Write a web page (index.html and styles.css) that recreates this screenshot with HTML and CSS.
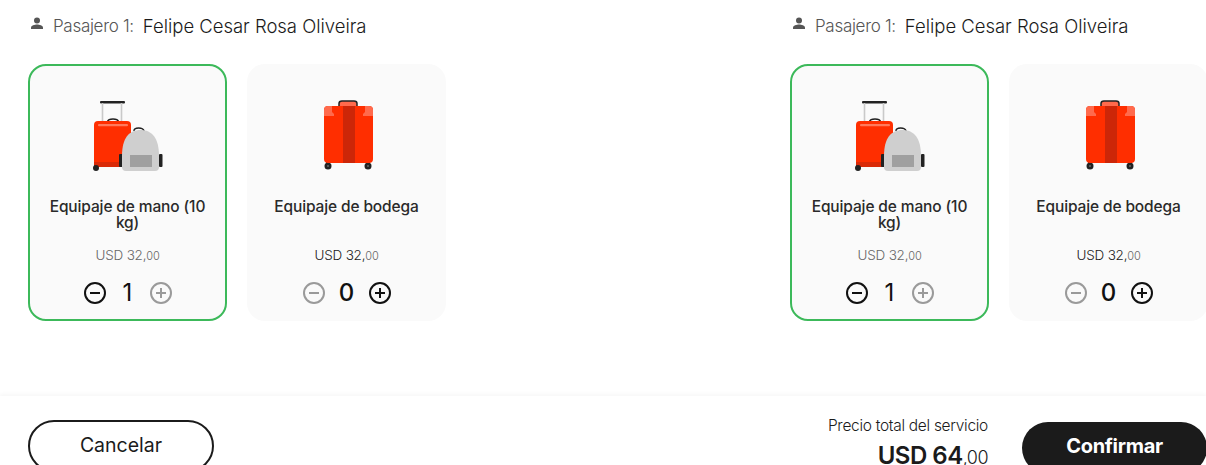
FILE: index.html
```html
<!DOCTYPE html>
<html lang="es">
<head>
    <meta charset="UTF-8">
    <meta name="viewport" content="width=device-width, initial-scale=1.0">
    <link rel="stylesheet" href="styles.css">
</head>
<body>
    <svg class="icon-defs" width="0" height="0">
        <symbol id="icon-person" viewBox="0 0 16 16">
            <circle cx="8" cy="4.5" r="3" fill="currentColor"/>
            <path d="M2 13v-1.5C2 9.6 5.6 8.6 8 8.6s6 1 6 2.9V13z" fill="currentColor"/>
        </symbol>
        <symbol id="icon-minus" viewBox="0 0 24 24">
            <circle cx="12" cy="12" r="10" fill="none" stroke="currentColor" stroke-width="2"/>
            <path d="M7 12h10" stroke="currentColor" stroke-width="2"/>
        </symbol>
        <symbol id="icon-plus" viewBox="0 0 24 24">
            <circle cx="12" cy="12" r="10" fill="none" stroke="currentColor" stroke-width="2"/>
            <path d="M7 12h10M12 7v10" stroke="currentColor" stroke-width="2"/>
        </symbol>
        <symbol id="bag-cabin" viewBox="0 0 80 80">
            <rect x="12" y="5" width="25" height="2.4" rx="1" fill="#222"/>
            <path d="M14.500 7v20M33.500 7v20" stroke="#c9c9c9" stroke-width="1.600"/>
            <path d="M19.500 25.500c1-3.500 10-3.500 11 0" fill="none" stroke="#222" stroke-width="1.500"/>
            <rect x="6" y="66" width="4" height="6" fill="#222"/>
            <rect x="6" y="25" width="37" height="46" rx="4" fill="#ff2e00"/>
            <path d="M6 66h37v1a4 4 0 0 1-4 4H10a4 4 0 0 1-4-4z" fill="#d92a08"/>
            <rect x="10" y="28" width="30" height="2.200" rx="1" fill="#ff7a5c"/>
            <circle cx="8" cy="72" r="3" fill="#222"/>
            <rect x="31" y="58" width="4" height="13" rx="1" fill="#222"/>
            <rect x="71" y="58" width="3.500" height="13" rx="1" fill="#222"/>
            <path d="M46 35c0-4 9-4 10 0" fill="none" stroke="#222" stroke-width="1.500"/>
            <path d="M34 60C34 42 41 34 52.500 34S71 42 71 60v11a4 4 0 0 1-4 4H38a4 4 0 0 1-4-4z" fill="#cfcfcf"/>
            <rect x="42" y="59" width="22" height="12" fill="#a0a0a0"/>
        </symbol>
        <symbol id="bag-hold" viewBox="0 0 80 80">
            <path d="M32 10V7.500C32 5.500 33 5 35 5h12c2 0 3 .5 3 2.500V10" fill="#ff6a4c" stroke="#222" stroke-width="1.500"/>
            <rect x="19" y="63" width="4" height="6" fill="#222"/>
            <rect x="59" y="63" width="4" height="6" fill="#222"/>
            <circle cx="21" cy="70" r="3.500" fill="#222"/>
            <circle cx="61" cy="70" r="3.500" fill="#222"/>
            <circle cx="21" cy="70" r="1" fill="#666"/>
            <circle cx="61" cy="70" r="1" fill="#666"/>
            <rect x="17" y="10" width="49" height="57" rx="4" fill="#ff2e00"/>
            <rect x="36" y="10" width="12" height="57" fill="#cc2608"/>
            <path d="M21 10h4l0 6 2 2v2h-10V14a4 4 0 0 1 4-4z" fill="#ff6a4c"/>
            <path d="M62 10h-4l0 6-2 2v2h10V14a4 4 0 0 0-4-4z" fill="#ff6a4c"/>
        </symbol>
    </svg>

    <div class="passengers">
        <section class="passenger">
            <div class="passenger-name">
                <svg class="person-icon"><use href="#icon-person"/></svg>
                <span class="passenger-label">Pasajero 1:</span>
                <span class="passenger-value">Felipe Cesar Rosa Oliveira</span>
            </div>
            <div class="cards">
                <div class="card card-selected">
                    <svg class="bag"><use href="#bag-cabin"/></svg>
                    <div class="card-title">Equipaje de mano (10 kg)</div>
                    <div class="card-price card-price-muted">USD 32,<small>00</small></div>
                    <div class="qty">
                        <svg class="qty-btn"><use href="#icon-minus"/></svg>
                        <span class="qty-num qty-num-one">1</span>
                        <svg class="qty-btn qty-off"><use href="#icon-plus"/></svg>
                    </div>
                </div>
                <div class="card">
                    <svg class="bag"><use href="#bag-hold"/></svg>
                    <div class="card-title">Equipaje de bodega</div>
                    <div class="card-price">USD 32,<small>00</small></div>
                    <div class="qty">
                        <svg class="qty-btn qty-off"><use href="#icon-minus"/></svg>
                        <span class="qty-num">0</span>
                        <svg class="qty-btn"><use href="#icon-plus"/></svg>
                    </div>
                </div>
            </div>
        </section>

        <section class="passenger">
            <div class="passenger-name">
                <svg class="person-icon"><use href="#icon-person"/></svg>
                <span class="passenger-label">Pasajero 1:</span>
                <span class="passenger-value">Felipe Cesar Rosa Oliveira</span>
            </div>
            <div class="cards">
                <div class="card card-selected">
                    <svg class="bag"><use href="#bag-cabin"/></svg>
                    <div class="card-title">Equipaje de mano (10 kg)</div>
                    <div class="card-price card-price-muted">USD 32,<small>00</small></div>
                    <div class="qty">
                        <svg class="qty-btn"><use href="#icon-minus"/></svg>
                        <span class="qty-num qty-num-one">1</span>
                        <svg class="qty-btn qty-off"><use href="#icon-plus"/></svg>
                    </div>
                </div>
                <div class="card">
                    <svg class="bag"><use href="#bag-hold"/></svg>
                    <div class="card-title">Equipaje de bodega</div>
                    <div class="card-price">USD 32,<small>00</small></div>
                    <div class="qty">
                        <svg class="qty-btn qty-off"><use href="#icon-minus"/></svg>
                        <span class="qty-num">0</span>
                        <svg class="qty-btn"><use href="#icon-plus"/></svg>
                    </div>
                </div>
            </div>
        </section>
    </div>

    <footer class="footer">
        <button class="btn-cancel">Cancelar</button>
        <div class="footer-right">
            <div class="total">
                <div class="total-label">Precio total del servicio</div>
                <div class="total-price">USD 64<small>,00</small></div>
            </div>
            <button class="btn-confirm">Confirmar</button>
        </div>
    </footer>
</body>
</html>
```

FILE: styles.css
```css
html, body {
    height: 465px;
    overflow: hidden;
}

body {
    margin: 0;
    font-family: Inter, "Open Sans", sans-serif;
    color: #1b1b1b;
    background-color: #fff;
}

.icon-defs {
    display: block;
    height: 0;
}

.passengers {
    display: flex;
    height: 396px;
    padding-left: 28px;
}

.passenger {
    flex: none;
    width: 762px;
    padding-top: 14px;
}

.passenger-name {
    display: flex;
    align-items: center;
    height: 24px;
    margin-bottom: 26px;
}

.person-icon {
    width: 16px;
    height: 16px;
    margin: -4px 0 0 1px;
    color: #555;
}

.passenger-label {
    margin-left: 8px;
    font-size: 17px;
    font-weight: 300;
    letter-spacing: -0.3px;
    color: #555;
}

.passenger-value {
    margin-left: 9px;
    font-size: 18.5px;
    font-weight: 300;
    letter-spacing: -0.02px;
}

.cards {
    display: flex;
    gap: 20px;
}

.card {
    flex: none;
    display: flex;
    flex-direction: column;
    align-items: center;
    box-sizing: border-box;
    width: 199px;
    height: 257px;
    padding: 30px 14px 0;
    border: 2px solid transparent;
    border-radius: 18px;
    background-color: #fafafa;
}

.card-selected {
    border-color: #3cb95a;
}

.bag {
    flex: none;
    width: 80px;
    height: 80px;
}

.card-title {
    height: 42px;
    margin-top: 23px;
    font-size: 15.5px;
    font-weight: 500;
    line-height: 16px;
    letter-spacing: -0.13px;
    text-align: center;
    color: #2a2a2a;
}

.card-price {
    margin-top: 5px;
    font-size: 13.5px;
    font-weight: 300;
    line-height: 18px;
    letter-spacing: -0.2px;
}

.card-price small {
    font-size: 11px;
    color: #666;
}

.card-price-muted {
    color: #666;
}

.qty {
    display: flex;
    align-items: center;
    margin-top: 14px;
}

.qty-btn {
    width: 24px;
    height: 24px;
    color: #111;
}

.qty-off {
    color: #9a9a9a;
}

.qty-num {
    width: 42px;
    font-size: 24px;
    font-weight: 500;
    line-height: 28px;
    text-align: center;
    color: #111;
}

.qty-num-one {
    font-weight: 400;
}

.footer {
    display: flex;
    justify-content: space-between;
    align-items: flex-start;
    height: 69px;
    padding-left: 28px;
    box-shadow: 0 -2px 4px rgba(0, 0, 0, 0.035);
}

.btn-cancel {
    box-sizing: border-box;
    width: 186px;
    height: 52px;
    margin-top: 24px;
    padding-bottom: 4px;
    border: 2px solid #1b1b1b;
    border-radius: 26px;
    background-color: #fff;
    font-family: inherit;
    font-size: 19.5px;
    font-weight: 400;
    color: #1b1b1b;
}

.footer-right {
    display: flex;
    align-items: flex-start;
    margin-right: -1px;
}

.total {
    margin-top: 20px;
    text-align: right;
}

.total-label {
    font-size: 15.5px;
    font-weight: 300;
    letter-spacing: -0.3px;
    line-height: 20px;
}

.total-price {
    margin-top: 6px;
    font-size: 24px;
    font-weight: 600;
    letter-spacing: -0.5px;
    line-height: 28px;
}

.total-price small {
    font-size: 18px;
    font-weight: 300;
}

.btn-confirm {
    width: 185px;
    height: 52px;
    margin: 26px 0 0 34px;
    padding-bottom: 6px;
    border: none;
    border-radius: 26px;
    background-color: #1b1b1b;
    font-family: inherit;
    font-size: 20px;
    font-weight: 700;
    letter-spacing: -0.3px;
    color: #fff;
}
```
